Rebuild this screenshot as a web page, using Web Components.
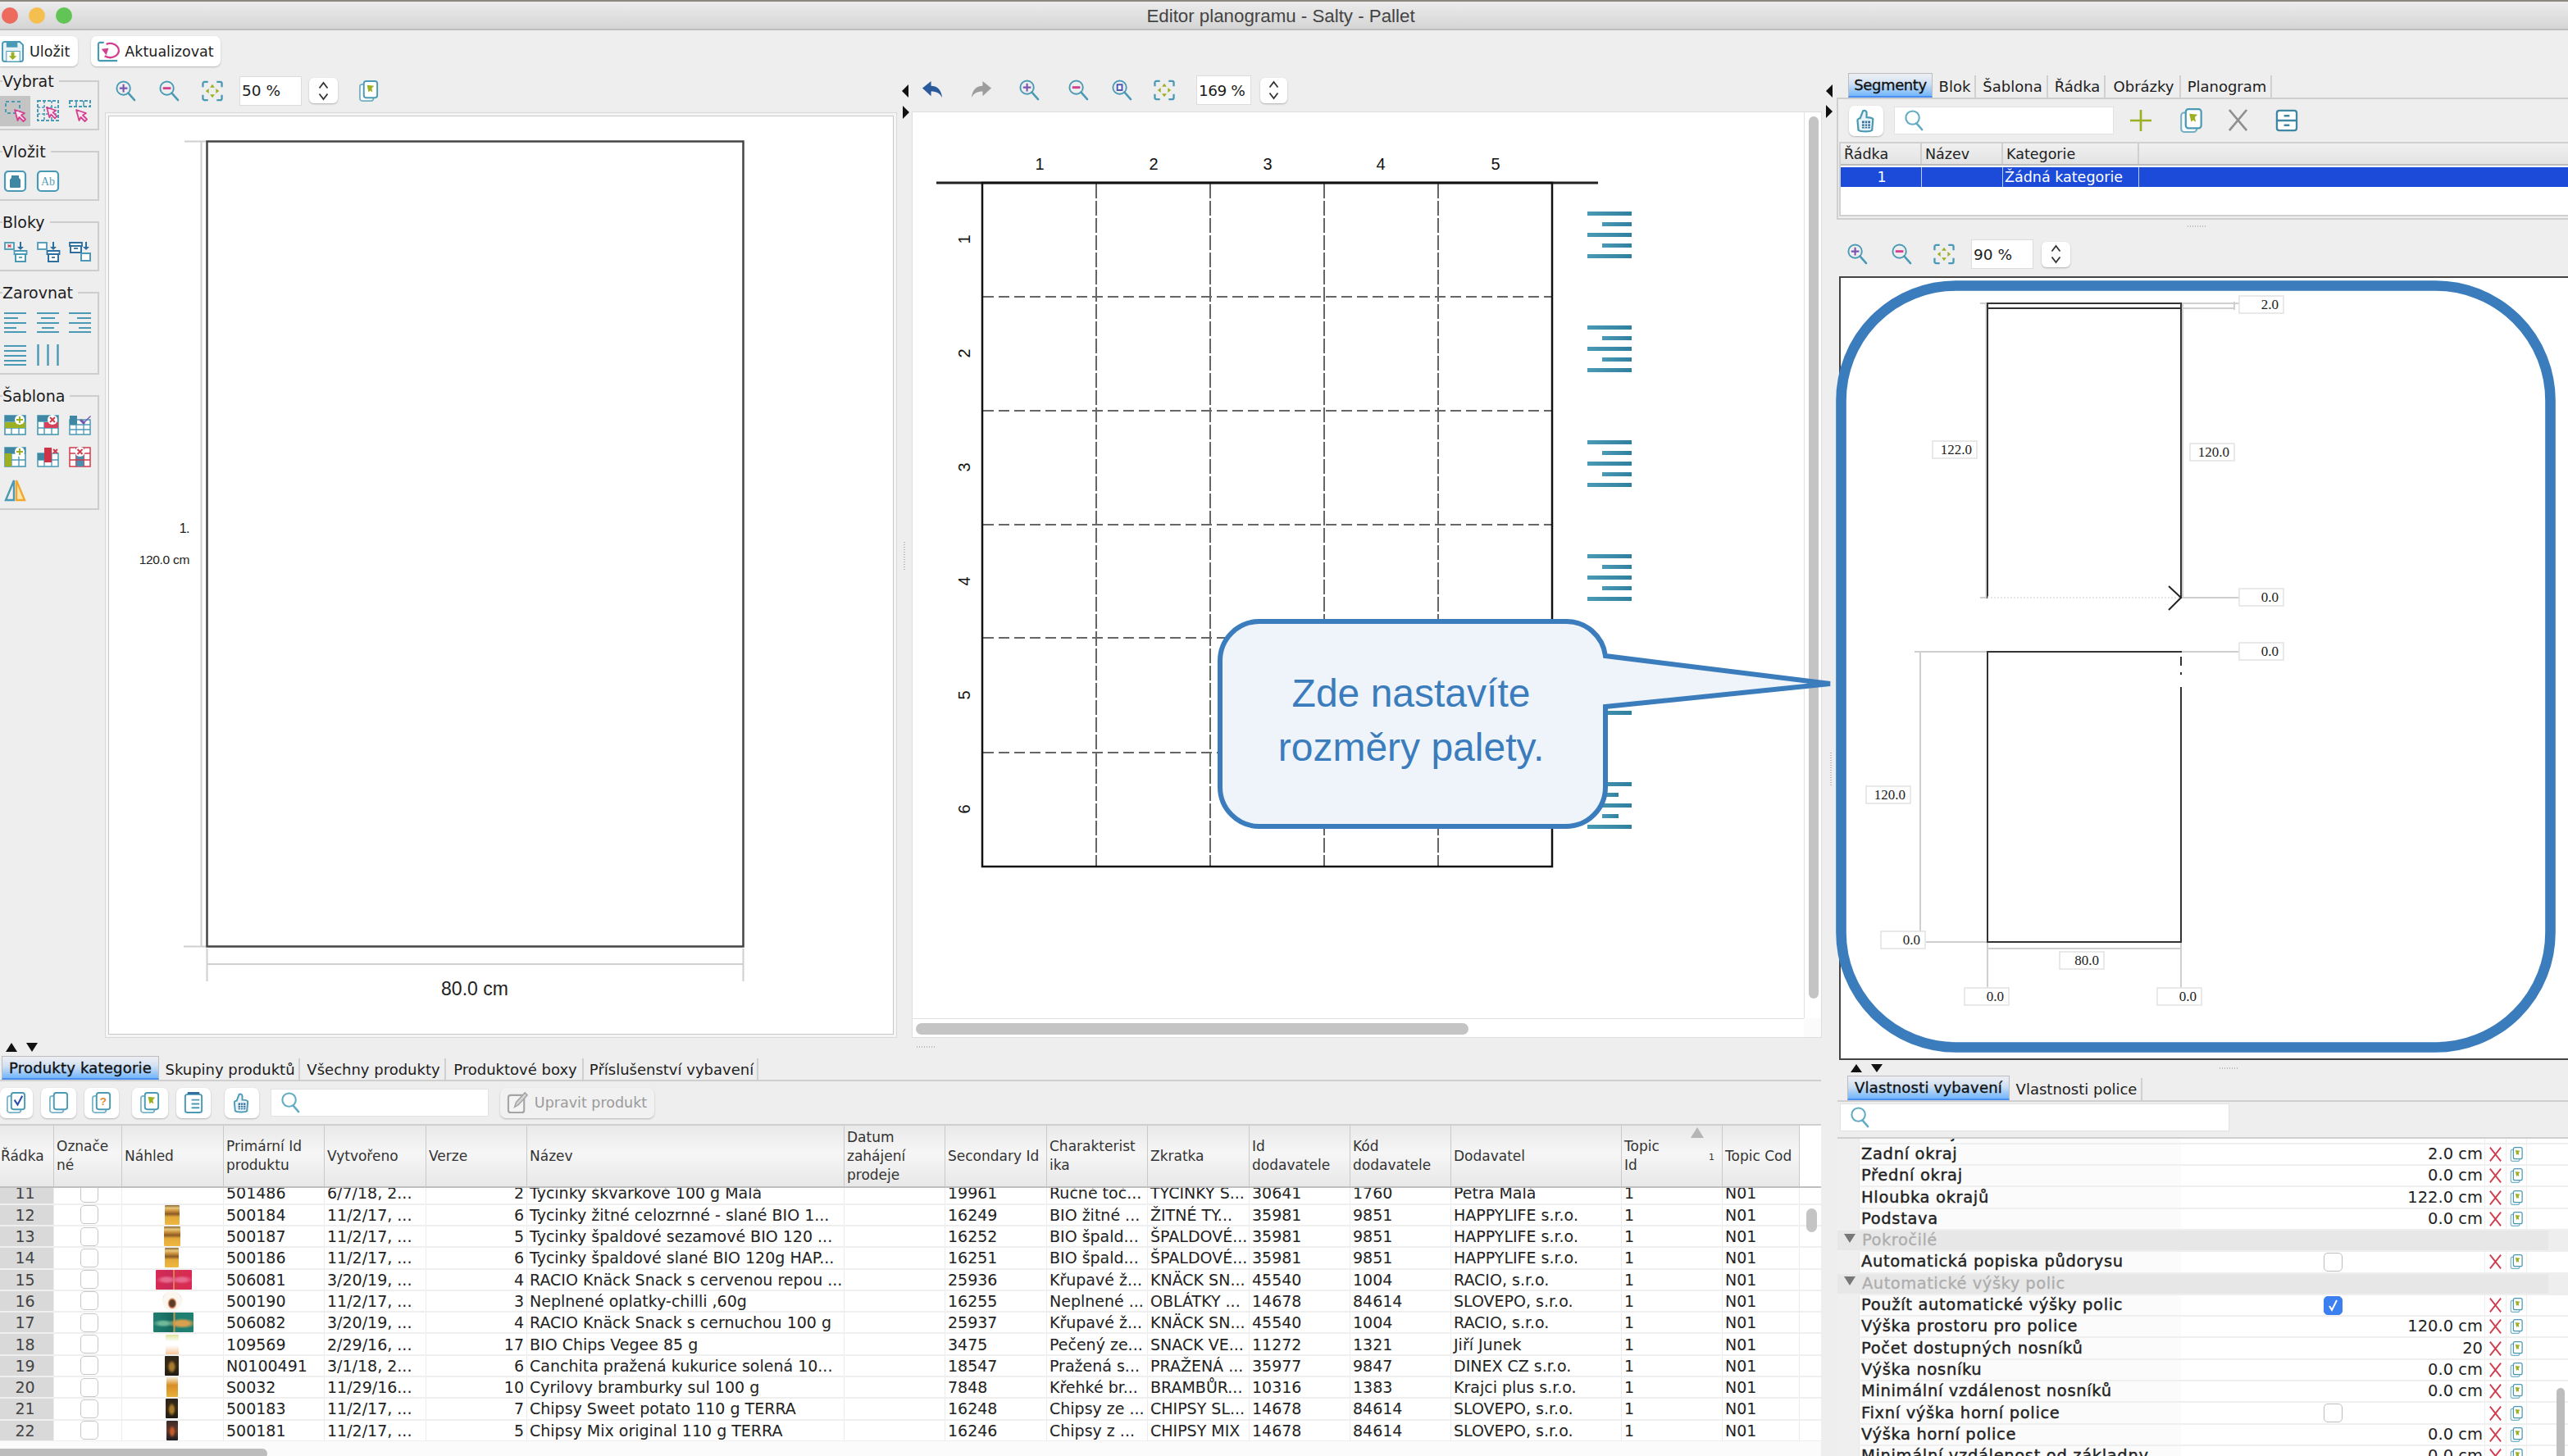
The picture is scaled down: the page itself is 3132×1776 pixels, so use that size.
<![CDATA[<!DOCTYPE html>
<html lang="cs"><head><meta charset="utf-8"><title>Editor planogramu</title>
<style>
html,body{margin:0;padding:0;background:#eee;width:3132px;height:1776px;overflow:hidden}
body{font-family:"DejaVu Sans",sans-serif;color:#1c1c1c}
</style></head><body>
<plano-app></plano-app>
<script>
const T='#4a9ab5',B='#2f6f9f',M='#d2408f',G='#9cb022',R='#d23b4b',V='#7a55b0';
const zoomI=(inner,c=T)=>`<circle cx="11" cy="10" r="8.5" fill="none" stroke="${c}" stroke-width="2"/><path d="M17 16l8 9" stroke="${c}" stroke-width="2.6" stroke-linecap="round"/>${inner}`;
const fourArrows=`<path d="M13.5 5l3 4h-6zM13.5 22l3-4h-6zM5 13.5l4-3v6zM22 13.5l-4-3v6z" fill="${G}"/>`;
const tbl=(h,extra='')=>`<rect x="1" y="1" width="25" height="23" fill="#fff" stroke="${T}" stroke-width="1.6"/><path d="M1 8h25M1 16h25M9 1v23M18 1v23" stroke="${T}" stroke-width="1.4"/>${h}${extra}`;
const cur=(x,y,s=1)=>`<path transform="translate(${x} ${y}) scale(${s})" d="M0 0l12 4-4 2.500 5 5-2.500 2.500-5-5-2 4z" fill="#fbe3f0" stroke="${M}" stroke-width="1.800" stroke-linejoin="round"/>`;
const hand=`<path d="M10 3c2-1 4 0 4 2v5c3 0 6 0 7 2l-1 12c-1 1-3 1.500-7 1.500s-7-.5-8-1.500L4 13c0-1 2-2 3-2z" fill="#eaf4f8" stroke="${T}" stroke-width="2"/><path d="M9 14h9v8H9z" fill="${B}"/><path d="M12 14v8M15 14v8M9 17h9M9 20h9" stroke="#eaf4f8" stroke-width="1"/>`;
const copy=(c=G)=>`<rect x="2" y="5" width="17" height="21" rx="3" fill="#fff" stroke="${T}" stroke-width="1.800" opacity=".75"/><rect x="7" y="1" width="17" height="21" rx="3" fill="#fff" stroke="${T}" stroke-width="2"/><path d="M11 6l9 1-3 3 1 5-3-2-2 2z" fill="${c}"/>`;
const docs=(inner='')=>`<rect x="2" y="5" width="17" height="21" rx="3" fill="#fff" stroke="${T}" stroke-width="1.800" opacity=".75"/><rect x="7" y="1" width="17" height="21" rx="3" fill="#fff" stroke="${T}" stroke-width="2"/>${inner}`;
const ICONS={
save:`<path d="M3 1h19l4 4v18a3 3 0 0 1-3 3H3a3 3 0 0 1-3-3V4a3 3 0 0 1 3-3z" fill="#e8f3f7" stroke="${T}" stroke-width="2"/><rect x="5" y="1" width="14" height="7" fill="${T}"/><rect x="5" y="13" width="17" height="13" fill="#fff" stroke="${T}" stroke-width="1"/><path d="M11 14h4v5h3l-5 5-5-5h3z" fill="${G}"/>`,
refresh:`<path d="M8 2H3a2 2 0 0 0-2 2v19a2 2 0 0 0 2 2h22" fill="none" stroke="${T}" stroke-width="2.200"/><path d="M11 4a11 9 0 1 1 -2 15" fill="none" stroke="${M}" stroke-width="2.400"/><path d="M5 10l9-1-3 9z" fill="${M}"/>`,
selRect:`<rect x="2" y="2" width="17" height="14" fill="none" stroke="${T}" stroke-width="2" stroke-dasharray="4 3"/>${cur(13,12,1)}`,
selGrid:`<rect x="1" y="1" width="25" height="24" fill="none" stroke="${T}" stroke-width="2" stroke-dasharray="4 2"/><path d="M1 9h25M1 17h25M9 1v24M18 1v24" stroke="${T}" stroke-width="1.600" stroke-dasharray="3 2"/>${cur(12,9,.95)}`,
selRow:`<rect x="1" y="1" width="25" height="7" fill="none" stroke="${T}" stroke-width="2" stroke-dasharray="4 2"/><path d="M9 1v7M18 1v7" stroke="${T}" stroke-width="1.600"/>${cur(9,12,1)}`,
shelf:`<rect x="1" y="1" width="25" height="24" rx="4" fill="#fff" stroke="${T}" stroke-width="2.200"/><path d="M9 6h9v3l2 2v9a1 1 0 0 1-1 1H8a1 1 0 0 1-1-1v-9l2-2z" fill="#3f87a3"/>`,
ab:`<rect x="1" y="1" width="25" height="24" rx="4" fill="#fff" stroke="${T}" stroke-width="2.200"/><text x="13.500" y="18" font-family="Liberation Serif" font-size="14" text-anchor="middle" fill="#5a9fb8">Ab</text>`,
blk1:`<rect x="1" y="2" width="11" height="8" fill="#e8f3f7" stroke="${T}" stroke-width="1.800"/><path d="M4.500 4.500l4 3M8.500 4.500l-4 3" stroke="${R}" stroke-width="1.500"/><path d="M20 1v7" stroke="${B}" stroke-width="2"/><path d="M16 7h8l-4 4z" fill="${B}"/><path d="M14 15v10h12V15z" fill="#fff" stroke="${T}" stroke-width="2"/><path d="M12.500 12h15v4h-15z" fill="#fff" stroke="${T}" stroke-width="1.800"/><path d="M18 20h4" stroke="${T}" stroke-width="1.800"/>`,
blk2:`<rect x="1" y="2" width="11" height="8" fill="#fff" stroke="${T}" stroke-width="1.800"/><path d="M20 1v7" stroke="${B}" stroke-width="2"/><path d="M16 7h8l-4 4z" fill="${B}"/><path d="M14 15v10h12V15z" fill="#fff" stroke="${B}" stroke-width="2"/><path d="M12.500 12h15v4h-15z" fill="#fff" stroke="${B}" stroke-width="1.800"/><path d="M18 20h4" stroke="${B}" stroke-width="1.800"/>`,
blk3:`<path d="M2 5v9h13V5z" fill="#fff" stroke="${B}" stroke-width="2"/><path d="M1 2h15v4H1z" fill="#fff" stroke="${B}" stroke-width="1.800"/><path d="M6 9h5" stroke="${B}" stroke-width="1.800"/><path d="M21 1v7" stroke="${B}" stroke-width="2"/><path d="M17 7h8l-4 4z" fill="${B}"/><rect x="15" y="15" width="11" height="9" fill="#fff" stroke="${T}" stroke-width="2"/>`,
alignL:`<path d="M0 2h27M0 8h17M0 14h27M0 20h15M0 25h27" stroke="${T}" stroke-width="2"/>`,
alignC:`<path d="M0 2h27M5 8h17M0 14h27M6 20h15M0 25h27" stroke="${T}" stroke-width="2"/>`,
alignR:`<path d="M0 2h27M10 8h17M0 14h27M12 20h15M0 25h27" stroke="${T}" stroke-width="2"/>`,
alignJ:`<path d="M0 2h27M0 8h27M0 14h27M0 20h27M0 25h27" stroke="${T}" stroke-width="2"/>`,
cols:`<path d="M1.500 0v26M13.500 0v26M25.500 0v26" stroke="${T}" stroke-width="2.400"/>`,
tp1:tbl(`<rect x="1" y="1" width="25" height="7" fill="#3f87a3"/><rect x="1" y="9" width="25" height="7" fill="${G}"/><circle cx="19" cy="6" r="6" fill="#fff"/><path d="M19 2v8M15 6h8" stroke="${G}" stroke-width="2"/>`),
tp2:tbl(`<rect x="1" y="1" width="25" height="7" fill="#3f87a3"/><rect x="9" y="9" width="17" height="7" fill="#d9415a"/><circle cx="19" cy="6" r="6" fill="#fff"/><path d="M16 3l6 6M22 3l-6 6" stroke="${R}" stroke-width="2"/>`),
tp3:`<rect x="1" y="6" width="25" height="18" fill="#fff" stroke="${T}" stroke-width="1.500"/><path d="M1 12h25M1 18h25M9 6v18M18 6v18" stroke="${T}" stroke-width="1.300"/><rect x="1" y="1" width="9" height="11" fill="#3f87a3"/><path d="M18 9l5-5 3-3 1 1-3 3-5 5z" fill="${V}"/><path d="M14 6l5 5" stroke="${V}" stroke-width="3"/>`,
tp4:tbl(`<rect x="1" y="1" width="25" height="7" fill="#3f87a3"/><rect x="1" y="8" width="8" height="16" fill="${G}"/><circle cx="19" cy="6" r="6" fill="#fff"/><path d="M19 2v8M15 6h8" stroke="${G}" stroke-width="2"/>`),
tp5:`<rect x="1" y="8" width="25" height="16" fill="#fff" stroke="${T}" stroke-width="1.500"/><path d="M1 16h25M9 8v16M18 8v16" stroke="${T}" stroke-width="1.300"/><rect x="1" y="8" width="8" height="8" fill="#3f87a3"/><rect x="9" y="1" width="9" height="18" fill="#cf3246"/><path d="M20 3l5 5M25 3l-5 5" stroke="${R}" stroke-width="2"/>`,
tp6:`<rect x="1" y="1" width="25" height="23" fill="#fff" stroke="${R}" stroke-width="1.500"/><path d="M9 1v23M18 1v23" stroke="${R}" stroke-width="1.800"/><rect x="9" y="1" width="9" height="23" fill="#4a8fb0"/><path d="M1 8h8M18 8h8M1 16h25" stroke="${R}" stroke-width="1.300"/><circle cx="13.500" cy="6" r="6" fill="#fff"/><path d="M10.500 3l6 6M16.500 3l-6 6" stroke="${R}" stroke-width="2"/>`,
mirror:`<path d="M12 1v24H2z" fill="none" stroke="${T}" stroke-width="2.400"/><path d="M15 1v24h10z" fill="#fde6ad" stroke="#f0a92e" stroke-width="2.400"/>`,
zin:zoomI(`<path d="M11 5v10M6 10h10" stroke="${V}" stroke-width="2.200"/>`),
zout:zoomI(`<path d="M6 10h10" stroke="${M}" stroke-width="3"/>`),
zbox:zoomI(`<rect x="8" y="6.500" width="6" height="7" fill="#fff" stroke="#4a55b0" stroke-width="2"/>`),
fit:`<path d="M8 2H3.500A2 2 0 0 0 1.500 4v4.500M19 2h4.500a2 2 0 0 1 2 2v4.500M8 25H3.500a2 2 0 0 1-2-2v-4.500M19 25h4.500a2 2 0 0 0 2-2v-4.500" fill="none" stroke="${T}" stroke-width="2.400"/>${fourArrows}`,
copy:copy(),
undo:`<path d="M1 11L12 2v6c7 0 13 4 14 15-3-6-7-8-14-8v6z" fill="#2a5a9c"/>`,
redo:`<path d="M26 11L15 2v6C8 8 2 12 1 23c3-6 7-8 14-8v6z" fill="#9d9d9d"/>`,
glass:`<circle cx="11" cy="10" r="8.500" fill="none" stroke="#62adc4" stroke-width="2.200"/><path d="M16 17l7 8" stroke="#62adc4" stroke-width="2.600" stroke-linecap="round"/>`,
plus:`<path d="M13.500 0v27M0 13.500h27" stroke="${G}" stroke-width="2.800"/>`,
cross:`<path d="M2 0l22 26M24 0L2 26" stroke="#8f8f8f" stroke-width="2.800"/>`,
cabinet:`<rect x="1" y="1" width="25" height="25" rx="3" fill="#fff" stroke="#3f87a3" stroke-width="2.400"/><path d="M1 13.500h25M10 7.500h7M10 19.500h7" stroke="#3f87a3" stroke-width="2.400"/>`,
hand:hand,
dcheck:docs(`<path d="M11 10l4 6 6-11" fill="none" stroke="#2d4fb0" stroke-width="2.200"/>`),
dblank:docs(),
dq:docs(`<text x="15.500" y="17" text-anchor="middle" font-family="Liberation Sans" font-weight="700" font-size="14" fill="#e08a2e">?</text>`),
dlist:`<rect x="3" y="3" width="21" height="23" rx="3" fill="#fff" stroke="${T}" stroke-width="2"/><rect x="6" y="0" width="15" height="3" fill="${B}"/><path d="M11 10h10M11 15h10M11 20h10" stroke="${T}" stroke-width="2"/>`,
edit:`<rect x="1" y="4" width="20" height="22" rx="3" fill="#f4f4f4" stroke="#a5a5a5" stroke-width="2.200"/><path d="M9 19l2-6L22 1l3 3-11 12z" fill="#d5d5d5" stroke="#a5a5a5" stroke-width="1.600"/>`,
xsmall:`<path d="M3 1l21 25M24 1L3 26" stroke="${R}" stroke-width="3"/>`
};
function el(host,css,html){const r=host.shadowRoot||host.attachShadow({mode:'open'});r.innerHTML=`<style>${css}</style>${html}`;return r}
class UiIcon extends HTMLElement{connectedCallback(){const n=this.getAttribute('name');const s=+this.getAttribute('size')||26;const w=+this.getAttribute('w')||s;
 el(this,`:host{display:inline-flex;width:${w}px;height:${s}px;flex:none}svg{display:block;width:100%;height:100%;overflow:visible}`,`<svg viewBox="0 0 27 27" preserveAspectRatio="none">${ICONS[n]||''}</svg>`)}}
customElements.define('ui-icon',UiIcon);
class MacTitlebar extends HTMLElement{connectedCallback(){el(this,`:host{display:flex;align-items:center;justify-content:center;height:37px;box-sizing:border-box;border-top:2px solid #8b8880;border-bottom:2px solid #bdbdbd;background:linear-gradient(#ececec,#d5d5d5);position:relative;font:22.300px "Liberation Sans",sans-serif;color:#444;padding:2px 8px 0 0}
.l{display:flex;gap:13px;margin-left:2px;width:0;flex:none;position:absolute;left:0;top:7px}.d{width:20px;height:20px;border-radius:50%;flex:none}`,
`<div class="l"><div class="d" style="background:#ec6a5e"></div><div class="d" style="background:#f5bf4f"></div><div class="d" style="background:#61c454"></div></div><slot></slot>`)}}
customElements.define('mac-titlebar',MacTitlebar);
class ToolButton extends HTMLElement{connectedCallback(){const i=this.getAttribute('icon');const off=this.hasAttribute('disabled');el(this,`:host{display:inline-flex;align-items:center;gap:7px;box-sizing:border-box;height:37px;padding:0 ${this.hasAttribute('tight')?0:6}px;background:${off?'#f1f1f1':'#fff'};border-radius:7px;box-shadow:0 1px 2px #b5b5b5;font:17.500px "DejaVu Sans",sans-serif;color:${off?'#9a9a9a':'#1d1d1d'};white-space:nowrap;flex:none;justify-content:center}`,
`${i?`<ui-icon name="${i}" size="${this.getAttribute('size')||26}"></ui-icon>`:''}<slot></slot>`)}}
customElements.define('tool-button',ToolButton);
class PaletteGroup extends HTMLElement{connectedCallback(){el(this,`:host{display:block;margin-left:-3px;width:124px;box-sizing:border-box;border:2px solid #cdcdcd;border-left:0;padding:0 0 1.500px 2px;margin-top:25px}
.lg{display:table;margin:-12px 0 0 4px;padding:0 6px 0 0;background:#eee;font:19px/22px "DejaVu Sans",sans-serif;color:#1c1c1c}
.g{display:grid;grid-template-columns:repeat(3,39.500px);grid-auto-rows:39.500px;margin-top:6px}`,
`<div class="lg">${this.getAttribute('label')}</div><div class="g"><slot></slot></div>`)}}
customElements.define('palette-group',PaletteGroup);
class PalItem extends HTMLElement{connectedCallback(){el(this,`:host{display:flex;align-items:center;justify-content:center}
.s{display:flex;align-items:center;justify-content:center;width:37px;height:37px;${this.hasAttribute('on')?'background:#c4c4c4':''}}`,`<div class="s"><ui-icon name="${this.getAttribute('name')}" size="27"></ui-icon></div>`)}}
customElements.define('pal-item',PalItem);
class PalettePanel extends HTMLElement{connectedCallback(){const g=(l,a)=>`<palette-group label="${l}">${a.map(n=>n.startsWith('*')?`<pal-item name="${n.slice(1)}" on></pal-item>`:`<pal-item name="${n}"></pal-item>`).join('')}</palette-group>`;
el(this,`:host{display:block;width:127px;flex:none;padding-top:14px;box-sizing:border-box;overflow:hidden}palette-group:first-of-type{margin-top:0}`,
g('Vybrat',['*selRect','selGrid','selRow'])+g('Vložit',['shelf','ab'])+g('Bloky',['blk1','blk2','blk3'])+g('Zarovnat',['alignL','alignC','alignR','alignJ','cols'])+g('Šablona',['tp1','tp2','tp3','tp4','tp5','tp6','mirror']))}}
customElements.define('palette-panel',PalettePanel);
class ZoomField extends HTMLElement{connectedCallback(){const w=this.getAttribute('w')||76;el(this,`:host{display:inline-flex;align-items:center;box-sizing:border-box;width:${w}px;height:36px;background:#fff;border:1px solid #dcdcdc;padding-left:${this.getAttribute('pad')||2}px;font:18.500px "DejaVu Sans",sans-serif;flex:none;letter-spacing:${this.getAttribute('ls')||0}}`,`<slot></slot>`)}}
customElements.define('zoom-field',ZoomField);
class StepButton extends HTMLElement{connectedCallback(){el(this,`:host{display:inline-flex;align-items:center;justify-content:center;box-sizing:border-box;width:${this.getAttribute('w')||35}px;height:31px;background:#fff;border-radius:6px;box-shadow:0 1px 2px #b0b0b0;flex:none}svg{width:13px;height:24px}`,`<svg viewBox="0 0 13 24"><path d="M1.500 8.500L6.500 2l5 6.500M1.500 15.500l5 6.500 5-6.500" fill="none" stroke="#333" stroke-width="1.800"/></svg>`)}}
customElements.define('step-button',StepButton);
class LeftPane extends HTMLElement{connectedCallback(){el(this,`:host{display:flex;flex-direction:column;width:967px;flex:none}
.bar{height:53px;display:flex;align-items:center;padding-left:13px;box-sizing:border-box}
.p{flex:1;box-sizing:border-box;margin-left:1px;border:1px solid #d9d9d9;background:#f5f5f5;padding:3px;min-height:0}
.i{box-sizing:border-box;height:100%;border:1px solid #c8c8c8;background:#fff;overflow:hidden}
svg{display:block;width:100%;height:100%}
.m{margin-left:27px}`,
`<div class="bar"><ui-icon name="zin"></ui-icon><ui-icon class="m" name="zout"></ui-icon><ui-icon class="m" name="fit"></ui-icon><zoom-field style="margin-left:20px;">50 %</zoom-field><step-button style="margin-left:9px"></step-button><ui-icon style="margin-left:25px" name="copy"></ui-icon></div>
<div class="p"><div class="i"><svg viewBox="133 142 956 1119" preserveAspectRatio="none" font-family="Liberation Sans">
<path d="M225 172.500h27M245.500 172.500V1154M224 1154.500h28M252.500 1157v40M906.500 1157v40M252 1176h655" stroke="#cfcfcf" stroke-width="2" fill="none"/>
<rect x="252.500" y="172.500" width="654" height="982" fill="#fff" stroke="#444" stroke-width="2.500"/>
<text x="231" y="650" text-anchor="end" font-size="16" letter-spacing="-.5" fill="#222">1.</text>
<text x="231" y="688" text-anchor="end" font-size="15.500" letter-spacing="-.3" fill="#222">120.0 cm</text>
<text x="579" y="1214" text-anchor="middle" font-size="23" fill="#222">80.0 cm</text>
</svg></div></div>`)}}
customElements.define('left-pane',LeftPane);
class CenterPane extends HTMLElement{connectedCallback(){
let L='';const xs=[1337,1476,1615,1754],ys=[362,501,640,778,918];
xs.forEach(x=>L+=`<path d="M${x} 224V1056" stroke="#666" stroke-width="2" stroke-dasharray="18 3" fill="none"/>`);
ys.forEach(y=>L+=`<path d="M1199 ${y}H1892" stroke="#666" stroke-width="2" stroke-dasharray="13 6" fill="none"/>`);
[1268,1407,1546,1684,1824].forEach((x,i)=>L+=`<text x="${x}" y="207" text-anchor="middle" font-size="20" fill="#111">${i+1}</text>`);
[292,431,570,709,848,987].forEach((y,i)=>L+=`<text transform="translate(1183 ${y}) rotate(-90)" text-anchor="middle" font-size="20" fill="#111">${i+1}</text>`);
[258,397,537,676,815,954].forEach((y,i)=>{const sw=i==5?20:36;
 [0,13,26,39,52].forEach((d,j)=>{const s=j%2==1;L+=`<rect x="${s?1954:1936}" y="${y+d}" width="${s?sw:54}" height="5" fill="url(#bar)"/>`})});
el(this,`:host{display:flex;flex-direction:column;flex:1;min-width:0}
.bar{height:52px;display:flex;align-items:center;padding-left:30px;box-sizing:border-box;position:relative}
.wrap{flex:1;display:flex;min-height:0}
.gut{width:18px;flex:none;position:relative;display:flex;flex-direction:column}
.tri{width:0;height:0;border-top:8px solid transparent;border-bottom:8px solid transparent;flex:none}
.dots{width:2px;height:36px;margin:516px 0 0 8px;background:repeating-linear-gradient(#bbb 0 1px,transparent 1px 3px)}
.c{flex:1;display:grid;grid-template-columns:1fr 21px;grid-template-rows:1fr 23px;background:#fff;border:1px solid #ddd;margin-right:3px;min-width:0}
svg.d{display:block;width:100%;height:100%;grid-area:1/1}
.vs{border-left:1px solid #e2e2e2;padding:5px 3px 24px 5px;box-sizing:border-box}.vs div{height:100%;background:#c4c4c4;border-radius:7px}
.hs{border-top:1px solid #e2e2e2;padding:5px 0 3px 4px;box-sizing:border-box}.hs div{height:100%;width:674px;background:#c4c4c4;border-radius:7px}
.cn{background:#fbfbfb}
.t{position:absolute;left:6px;top:19px;border-right:8px solid #111}`,
`<div class="bar"><div class="tri t"></div><ui-icon name="undo" w="26"></ui-icon><ui-icon name="redo" style="margin-left:34px"></ui-icon><ui-icon name="zin" style="margin-left:32px"></ui-icon><ui-icon name="zout" style="margin-left:34px"></ui-icon><ui-icon name="zbox" style="margin-left:27px"></ui-icon><ui-icon name="fit" style="margin-left:26px"></ui-icon><zoom-field w="67" style="margin-left:26px" pad="2" ls="-.5px">169 %</zoom-field><step-button w="33" style="margin-left:11px"></step-button></div>
<div class="wrap"><div class="gut"><div class="tri" style="border-left:8px solid #111;margin:-7px 0 0 7px;position:relative"></div><div class="dots"></div></div>
<div class="c"><svg class="d" viewBox="1113 137 1087 1105" preserveAspectRatio="none" font-family="Liberation Sans"><defs><linearGradient id="bar"><stop offset="0" stop-color="#4a9ab5"/><stop offset="1" stop-color="#2f7f9f"/></linearGradient></defs>
${L}<path d="M1142 223H1949" stroke="#222" stroke-width="3"/><rect x="1198" y="223" width="695" height="834" fill="none" stroke="#111" stroke-width="2.500"/></svg>
<div class="vs"><div></div></div><div class="hs"><div></div></div><div class="cn"></div></div></div>`)}}
customElements.define('center-pane',CenterPane);
class TabStrip extends HTMLElement{connectedCallback(){const w=this.getAttribute('widths').split(',').map(Number);const t=this.getAttribute('tabs').split('|');
el(this,`:host{display:flex;height:${this.getAttribute('h')||30}px;flex:none;box-sizing:border-box;padding-left:${this.getAttribute('pl')||0}px;font:18px "DejaVu Sans",sans-serif;color:#1d1d1d}
.t{display:flex;align-items:center;justify-content:center;box-sizing:border-box;border-right:2px solid #d0d0d0;white-space:nowrap;margin-top:3px;padding-left:3px}
.a{margin-top:0;padding-left:0;border:1px solid #bdbdbd;border-bottom:2px solid #4a8ff0;background:linear-gradient(#e9edf3 10%,#cfe0f3 45%,#72b6fb);-webkit-text-stroke:.35px #111;color:#111;letter-spacing:${this.getAttribute('als')||'.2px'}}`,
t.map((x,i)=>`<div class="t ${i==0?'a':''}" style="width:${w[i]}px">${x}</div>`).join(''))}}
customElements.define('tab-strip',TabStrip);
class SearchBox extends HTMLElement{connectedCallback(){el(this,`:host{display:flex;align-items:center;box-sizing:border-box;background:#fff;border:1px solid #e2e2e2;padding-left:11px;height:34px;flex:none}`,`<ui-icon name="glass" size="26"></ui-icon>`)}}
customElements.define('search-box',SearchBox);
const ROWS=[
['11','501486','6/7/18, 2...','2','Tycinky škvarkové 100 g Malá','19961','Ručné toč...','TYČINKY Š...','30641','1760','Petra Malá','',0],
['12','500184','11/2/17, ...','6','Tycinky žitné celozrnné - slané BIO 1...','16249','BIO žitné ...','ŽITNÉ TY...','35981','9851','HAPPYLIFE s.r.o.','o',18],
['13','500187','11/2/17, ...','5','Tycinky špaldové sezamové BIO 120 ...','16252','BIO špald...','ŠPALDOVÉ...','35981','9851','HAPPYLIFE s.r.o.','o',20],
['14','500186','11/2/17, ...','6','Tycinky špaldové slané BIO 120g HAP...','16251','BIO špald...','ŠPALDOVÉ...','35981','9851','HAPPYLIFE s.r.o.','o',17],
['15','506081','3/20/19, ...','4','RACIO Knäck Snack s cervenou repou ...','25936','Křupavé ž...','KNÄCK SN...','45540','1004','RACIO, s.r.o.','r',44],
['16','500190','11/2/17, ...','3','Neplnené oplatky-chilli ,60g','16255','Neplnené ...','OBLÁTKY ...','14678','84614','SLOVEPO, s.r.o.','c',24],
['17','506082','3/20/19, ...','4','RACIO Knäck Snack s cernuchou 100 g','25937','Křupavé ž...','KNÄCK SN...','45540','1004','RACIO, s.r.o.','g',49],
['18','109569','2/29/16, ...','17','BIO Chips Vegee 85 g','3475','Pečený ze...','SNACK VE...','11272','1321','Jiří Junek','p',16],
['19','N0100491','3/1/18, 2...','6','Canchita pražená kukurice solená 10...','18547','Pražená s...','PRAŽENÁ ...','35977','9847','DINEX CZ s.r.o.','d',17],
['20','S0032','11/29/16...','10','Cyrilovy bramburky sul 100 g','7848','Křehké br...','BRAMBŮR...','10316','1383','Krajci plus s.r.o.','y',14],
['21','500183','11/2/17, ...','7','Chipsy Sweet potato 110 g TERRA','16248','Chipsy ze ...','CHIPSY SL...','14678','84614','SLOVEPO, s.r.o.','d',15],
['22','500181','11/2/17, ...','5','Chipsy Mix original 110 g TERRA','16246','Chipsy z ...','CHIPSY MIX','14678','84614','SLOVEPO, s.r.o.','m',14]];
const COLS='66px 83px 124px 123px 124px 123px 387px 123px 124px 123px 124px 123px 123px 208px 123px 94px';
const THUMB={o:'linear-gradient(#8b6a3a,#e7c77a 15%,#c98f3a 30%,#8a5a25 45%,#e2a93a 60%,#efb83f)',r:'radial-gradient(ellipse at 30% 50%,#e76a8e 0 12%,transparent 30%),radial-gradient(ellipse at 72% 50%,#e76a8e 0 12%,transparent 30%),linear-gradient(90deg,#d92a55,#c72a58 47%,#e6b04a 50%,#d5304f 53%,#d92a55)',c:'radial-gradient(ellipse at 50% 62%,#5a3a2a 0 18%,#c06a3a 24%,#fbf6f0 34%,#fbf6f0 70%,#c8654d 84%)',g:'radial-gradient(ellipse at 25% 55%,#6fb89a 0 10%,transparent 26%),radial-gradient(ellipse at 72% 55%,#d9a050 0 16%,transparent 34%),linear-gradient(90deg,#1f7f70,#17685f 48%,#c79a50 52%,#1f7f70 56%)',p:'linear-gradient(#dfe59a,#fff 35%,#fff 55%,#f5c69a)',d:'radial-gradient(ellipse at 50% 55%,#a87a2e 0 20%,transparent 45%),linear-gradient(#2a2418,#3d2c14 50%,#1d1a14)',y:'linear-gradient(#f5ead0,#d98f25 40%,#e5b03a)',m:'radial-gradient(ellipse at 50% 55%,#c25a2a 0 18%,transparent 40%),linear-gradient(#382c28,#6a3a2a 50%,#1d1d22)'};
class ProductRow extends HTMLElement{connectedCallback(){const d=JSON.parse(this.getAttribute('data'));
const [n,id,dt,ver,name,sec,ch,zk,idd,kod,dod,th,tw]=d;
const c=(t,x='')=>`<div class="c ${x}">${t}</div>`;
el(this,`:host{display:grid;grid-template-columns:${COLS};height:26.300px;box-sizing:border-box;border-bottom:2px solid #efefef;font:19px/24px "DejaVu Sans",sans-serif;color:#222;background:#fff}
.c{border-right:1px solid #ececec;padding-left:3px;white-space:nowrap;overflow:hidden;display:flex;align-items:center;box-sizing:border-box}
.n{background:#d9d9d9;justify-content:center;padding:0 4px 0 0;color:#444;border-right:1px solid #eee}.r{justify-content:flex-end;padding:0 3px 0 0}
.cb{width:22px;height:23px;box-sizing:border-box;background:#fff;border:1.500px solid #c6c6c6;border-radius:5px;margin-left:29px}
.t{justify-content:center;padding:0}.th{height:24px;border-radius:1px}`,
c(n,'n')+c('<div class="cb"></div>')+c(th?`<div class="th" style="width:${tw}px;background:${THUMB[th]};${th=='c'?'border-radius:50%;':''}margin-left:${(th=='r'||th=='g')?2:-2}px"></div>`:'','t')+c(id)+c(dt)+c(ver,'r')+c(name)+c('')+c(sec)+c(ch)+c(zk)+c(idd)+c(kod)+c(dod)+c('1')+c('N01'))}}
customElements.define('product-row',ProductRow);
class ProductsPane extends HTMLElement{connectedCallback(){
const hdr=['Řádka','Označe<br>né','Náhled','Primární Id<br>produktu','Vytvořeno','Verze','Název','Datum<br>zahájení<br>prodeje','Secondary Id','Charakterist<br>ika','Zkratka','Id<br>dodavatele','Kód<br>dodavatele','Dodavatel','Topic<br>Id','Topic Cod'];
el(this,`:host{display:block;flex:1;min-height:0;position:relative;overflow:hidden}
.tri{display:flex;gap:13px;height:22px;align-items:center;padding-left:7px;position:relative}.u{width:0;height:0;border-left:7px solid transparent;border-right:7px solid transparent;border-bottom:11px solid #111}.d{border-bottom:0;border-top:11px solid #111;margin-left:-2px}
.sp{width:22px;height:2px;margin-left:1059px;background:repeating-linear-gradient(90deg,#bbb 0 1px,transparent 1px 3px)}
.line{border-bottom:2px solid #cfcfcf;width:2221px}
.tb{display:flex;align-items:center;height:54px;box-sizing:border-box;width:2221px;border-bottom:2px solid #cfcfcf}
.hd{display:grid;grid-template-columns:${COLS} 26px;width:2221px;height:76px;box-sizing:border-box;border-bottom:2px solid #bfbfbf;font:17px/23px "DejaVu Sans",sans-serif;color:#333;background:#fff}
.h{background:linear-gradient(#e9e9e9,#f6f6f6 45%,#e8e8e8);border-right:1px solid #c9c9c9;display:flex;align-items:center;padding-left:3px;box-sizing:border-box;overflow:hidden;white-space:nowrap;position:relative}
.h:first-child{padding-left:1px}.h:last-child{background:#fff;border:0}
.so{position:absolute;left:84px;top:2px;width:0;height:0;border-left:8px solid transparent;border-right:8px solid transparent;border-bottom:13px solid #b5b5b5}
.sn{position:absolute;left:106px;top:27px;font-size:11px}
.body{height:309px;width:2221px;overflow:hidden;position:relative;background:#fff}.rows{margin-top:-5.700px}
.vt{position:absolute;left:2203px;top:25px;width:13px;height:29px;background:#c4c4c4;border-radius:7px}
.hsb{width:2221px;height:18px;background:#fbfbfb;padding-top:9px;box-sizing:border-box}.hsb div{width:326px;height:12px;border-radius:0 7px 7px 0;background:#bdbdbd}`,
`<div class="tri"><div class="u"></div><div class="u d"></div><div class="sp"></div></div>
<div class="line"><tab-strip h="29" tabs="Produkty kategorie|Skupiny produktů|Všechny produkty|Produktové boxy|Příslušenství vybavení" widths="192,172,178,168,213" pl="2"></tab-strip></div>
<div class="tb"><tool-button icon="dcheck" tight style="width:40px"></tool-button><tool-button icon="dblank" tight style="width:43px;margin-left:10px"></tool-button><tool-button icon="dq" tight style="width:42px;margin-left:10px"></tool-button><tool-button icon="copy" tight style="width:44px;margin-left:16px"></tool-button><tool-button icon="dlist" tight style="width:42px;margin-left:10px"></tool-button><tool-button icon="hand" tight style="width:42px;margin-left:17px"></tool-button><search-box style="width:266px;margin-left:14px"></search-box><tool-button icon="edit" disabled style="width:188px;margin-left:14px">Upravit produkt</tool-button></div>
<div class="hd">${hdr.map((h,i)=>`<div class="h">${h.split('<br>').length>1?`<div>${h}</div>`:h}${i==14?'<i class="so"></i><span class="sn">1</span>':''}</div>`).join('')}<div class="h"></div></div>
<div class="body"><div class="rows">${ROWS.map(r=>`<product-row data='${JSON.stringify(r).replace(/'/g,"&#39;")}'></product-row>`).join('')}</div><div class="vt"></div></div>
<div class="hsb"><div></div></div>`)}}
customElements.define('products-pane',ProductsPane);
class SegmentTable extends HTMLElement{connectedCallback(){
el(this,`:host{display:block;margin:0;box-sizing:border-box;background:#fff;border:2px solid #d0d0d0;border-right:0;height:91px;padding:0;font:17.500px "DejaVu Sans",sans-serif;color:#222}
.r{display:grid;grid-template-columns:99px 99px 166px 1fr;box-sizing:border-box}
.r div{display:flex;align-items:center;box-sizing:border-box;padding-left:4px;border-right:2px solid #cfcfcf;white-space:nowrap}
.h{height:27px;background:linear-gradient(#f0f0f0,#e3e3e3);margin-bottom:2px;border-bottom:2px solid #bbb}
.s{height:24px;background:#1b4bd8;color:#fff}.s div{border-right:1.500px solid #bcd0ff;padding-left:2px}.s div:first-child{justify-content:center}`,
`<div class="r h"><div>Řádka</div><div>Název</div><div>Kategorie</div><div style="border:0"></div></div>
<div class="r s"><div>1</div><div></div><div>Žádná kategorie</div><div style="border:0"></div></div>`)}}
customElements.define('segment-table',SegmentTable);
class DrawingPane extends HTMLElement{connectedCallback(){
const lab=(x,y,t)=>`<rect x="${x}" y="${y}" width="54" height="21" fill="#fff" stroke="#e2e2e2" stroke-width="1.500"/><text x="${x+48}" y="${y+16}" text-anchor="end" font-size="17" fill="#222">${t}</text>`;
el(this,`:host{display:block;box-sizing:border-box;flex:1;min-width:0;border-top:2px solid #444;border-left:2px solid #444;border-bottom:2px solid #444;background:#fff;overflow:hidden}svg{display:block;width:100%;height:100%}`,
`<svg viewBox="2245 339 887 952" preserveAspectRatio="none" font-family="Liberation Serif">
<g stroke="#cfcfcf" fill="none"><path stroke-width="3" d="M2423 370V729M2661.500 370V729"/><path stroke-width="2" d="M2415 370h9M2415 729h9M2660 370h71M2660 376h65M2725 368v10M2660 729h71M2335 795h89M2660 795h71M2342 795v341M2349 1149h75M2424 1157h236M2424 1149v56M2660 1149v56"/></g>
<rect x="2424" y="370" width="236" height="359" fill="none" stroke="#333" stroke-width="2"/><path d="M2424 376H2660" stroke="#333" stroke-width="2"/><path d="M2424 729H2659" stroke="#fff" stroke-width="3"/><path d="M2424 729H2660" stroke="#d0d0d0" stroke-dasharray="2 2"/>
<path d="M2645 715l15 14-15 15" fill="none" stroke="#222" stroke-width="2"/>
<rect x="2424" y="795" width="236" height="354" fill="none" stroke="#333" stroke-width="2"/><path d="M2660 796v5M2660 812v8M2660 823v15" stroke="#fff" stroke-width="3"/>
${lab(2731,361,'2.0')+lab(2357,538,'122.0')+lab(2671,541,'120.0')+lab(2731,718,'0.0')+lab(2731,784,'0.0')+lab(2276,959,'120.0')+lab(2294,1136,'0.0')+lab(2512,1161,'80.0')+lab(2396,1205,'0.0')+lab(2631,1205,'0.0')}
</svg>`)}}
customElements.define('drawing-pane',DrawingPane);
class PropRow extends HTMLElement{connectedCallback(){const a=this.getAttribute('label'),v=this.getAttribute('value')||'',cb=this.getAttribute('check'),no=this.hasAttribute('noic');
el(this,`:host{display:grid;grid-template-columns:27px 392px 370px 26px 25px 27px;height:26.300px;box-sizing:border-box;border-bottom:2px solid #efefef;font:19.500px/24px "DejaVu Sans",sans-serif;color:#222;background:#fff}
div{display:flex;align-items:center;box-sizing:border-box;white-space:nowrap;overflow:hidden}
.g{background:#efefef;border-right:1px solid #e5e5e5}.l{padding-left:2px;-webkit-text-stroke:.4px #222;letter-spacing:.65px;background:#fbfbfb}.v{justify-content:flex-end;padding-right:2px}
.cbw{justify-content:flex-start;padding-left:174px}.cb{width:23px;height:23px;background:#fff;border:1.500px solid #bdbdbd;border-radius:5px;box-sizing:border-box}.on{background:#3b7ff1;border-color:#3b7ff1;justify-content:center}
.ic{justify-content:center;border-left:1px solid #eee}`,
`<div class="g"></div><div class="l">${a}</div>${cb!=null?`<div class="cbw"><div class="cb ${cb=='1'?'on':''}">${cb=='1'?'<svg width="15" height="17" viewBox="0 0 15 17"><path d="M3 9l3 5 6-12" fill="none" stroke="#fff" stroke-width="2"/></svg>':''}</div></div>`:`<div class="v">${v}</div>`}<div class="ic">${no?'':'<ui-icon name="xsmall" size="18" w="17"></ui-icon>'}</div><div class="ic">${no?'':'<ui-icon name="copy" size="18" w="17"></ui-icon>'}</div><div class="ic"></div>`)}}
customElements.define('prop-row',PropRow);
class PropSection extends HTMLElement{connectedCallback(){el(this,`:host{display:flex;align-items:center;height:26.300px;box-sizing:border-box;width:867px;background:#e7e7e7;font:19.500px/24px "DejaVu Sans",sans-serif;color:#adadad;border-bottom:2px solid #efefef;-webkit-text-stroke:.3px #adadad;letter-spacing:.5px}
i{width:0;height:0;border-left:7px solid transparent;border-right:7px solid transparent;border-top:11px solid #777;margin:-6px 8px 0 8px}`,`<i></i><slot></slot>`)}}
customElements.define('prop-section',PropSection);
class RightPane extends HTMLElement{connectedCallback(){
const P=(l,v)=>`<prop-row label="${l}" value="${v}"></prop-row>`,C=(l,c)=>`<prop-row label="${l}" check="${c}"></prop-row>`;
el(this,`:host{display:flex;flex-direction:column;width:907px;flex:none;overflow:hidden;position:relative}
.top{display:flex;height:184px;flex:none;padding-top:5px;box-sizing:border-box}
.g{width:15px;flex:none;display:flex;flex-direction:column;padding-top:14px;gap:9px}.t{width:0;height:0;border-top:8px solid transparent;border-bottom:8px solid transparent}
.pn{flex:1;min-width:0;display:flex;flex-direction:column}
.bx{border-top:2px solid #cfcfcf;border-left:2px solid #cfcfcf;height:149px;box-sizing:border-box;border-bottom:2px solid #cfcfcf;padding:0 0 0 1px}
.tb{display:flex;align-items:center;height:52px;padding:0 0 0 12px;box-sizing:border-box}
.spl{height:15px;flex:none;display:flex;justify-content:center}.dots{margin:7px 0 0 0;width:22px;height:2px;background:repeating-linear-gradient(90deg,#bbb 0 1px,transparent 1px 3px)}
.z{height:54px;flex:none;display:flex;align-items:center;padding-left:27px;box-sizing:border-box}
.dr{display:flex;height:956px;flex:none}.dg{width:18px;flex:none}.dv{width:2px;height:42px;margin:581px 0 0 7px;background:repeating-linear-gradient(#bbb 0 1px,transparent 1px 3px)}
.tri{display:flex;gap:13px;height:19px;align-items:center;padding-left:32px;flex:none}.u{width:0;height:0;border-left:7px solid transparent;border-right:7px solid transparent;border-bottom:10px solid #111}.d{border-bottom:0;border-top:10px solid #111;margin-left:-2px}
.tsp{width:22px;height:2px;margin-left:398px;background:repeating-linear-gradient(90deg,#bbb 0 1px,transparent 1px 3px)}
.line{border-bottom:2px solid #cfcfcf;flex:none;margin-left:16px}
.sb{height:45px;flex:none;padding:2px 0 0 3px;box-sizing:border-box;border-bottom:2px solid #cfcfcf;margin-left:16px}
.pr{flex:1;min-height:0;overflow:hidden;margin-left:16px;position:relative}.list{margin-top:-19.500px}
.sc{position:absolute;left:877px;top:304px;width:10px;height:100px;background:#bdbdbd;border-radius:6px}`,
`<div class="top"><div class="g"><div class="t" style="border-right:8px solid #111;margin-left:2px"></div><div class="t" style="border-left:8px solid #111;margin-left:2px"></div></div>
<div class="pn"><tab-strip h="30" pl="14" als="-.4px" tabs="Segmenty|Blok|Šablona|Řádka|Obrázky|Planogram" widths="103,53,88,70,92,111"></tab-strip>
<div class="bx"><div class="tb"><tool-button icon="hand" tight size="30" style="width:42px"></tool-button><search-box style="width:268px;margin-left:13px"></search-box><ui-icon name="plus" style="margin-left:20px"></ui-icon><ui-icon name="copy" style="margin-left:34px" size="30"></ui-icon><ui-icon name="cross" style="margin-left:29px"></ui-icon><ui-icon name="cabinet" style="margin-left:33px"></ui-icon></div><segment-table></segment-table></div></div></div>
<div class="spl"><div class="dots"></div></div>
<div class="z"><ui-icon name="zin"></ui-icon><ui-icon name="zout" style="margin-left:28px"></ui-icon><ui-icon name="fit" style="margin-left:26px"></ui-icon><zoom-field style="margin-left:20px" pad="2">90 %</zoom-field><step-button style="margin-left:10px"></step-button></div>
<div class="dr"><div class="dg"><div class="dv"></div></div><drawing-pane></drawing-pane></div>
<div class="tri"><div class="u"></div><div class="u d"></div><div class="tsp"></div></div>
<div class="line"><tab-strip h="30" pl="12" tabs="Vlastnosti vybavení|Vlastnosti police" widths="198,162"></tab-strip></div>
<div class="sb"><search-box style="width:475px"></search-box></div>
<div class="pr"><div class="list"><prop-row noic label="Boční okraj" value=""></prop-row>${P('Zadní okraj','2.0 cm')+P('Přední okraj','0.0 cm')+P('Hloubka okrajů','122.0 cm')+P('Podstava','0.0 cm')}<prop-section>Pokročilé</prop-section>${C('Automatická popiska půdorysu','0')}<prop-section>Automatické výšky polic</prop-section>${C('Použít automatické výšky polic','1')+P('Výška prostoru pro police','120.0 cm')+P('Počet dostupných nosníků','20')+P('Výška nosníku','0.0 cm')+P('Minimální vzdálenost nosníků','0.0 cm')+C('Fixní výška horní police','0')+P('Výška horní police','0.0 cm')+P('Minimální vzdálenost od základny','0.0 cm')}</div><div class="sc"></div></div>`)}}
customElements.define('right-pane',RightPane);
class AnnotationOverlay extends HTMLElement{connectedCallback(){el(this,`:host{position:absolute;left:0;top:0;width:3132px;height:1776px;pointer-events:none}svg{display:block}`,
`<svg width="3132" height="1776" viewBox="0 0 3132 1776" font-family="Liberation Sans">
<rect x="2245.500" y="348.500" width="865" height="929" rx="140" fill="none" stroke="#3a7cbc" stroke-width="12.600"/>
<path d="M1536 758H1910A48 48 0 0 1 1958 800L2232 834L1958 862V960A48 48 0 0 1 1910 1008H1536A48 48 0 0 1 1488 960V806A48 48 0 0 1 1536 758Z" fill="#eff4fa" stroke="#3a7cbc" stroke-width="6"/>
<text x="1721" y="862" text-anchor="middle" font-size="48" fill="#3a7cbc">Zde nastavíte</text>
<text x="1721" y="928" text-anchor="middle" font-size="48" fill="#3a7cbc">rozměry palety.</text></svg>`)}}
customElements.define('annotation-overlay',AnnotationOverlay);
class PlanoApp extends HTMLElement{connectedCallback(){el(this,`:host{display:flex;flex-direction:column;position:relative;width:3132px;height:1776px;background:#eee;overflow:hidden}
.tb{display:flex;height:47px;gap:16px;align-items:flex-start;padding-top:7px;box-sizing:border-box;flex:none}
.m{display:flex;flex:1;min-height:0}
.lft{width:2225px;flex:none;display:flex;flex-direction:column}
.up{display:flex;height:1182px;flex:none}`,
`<mac-titlebar>Editor planogramu - Salty - Pallet</mac-titlebar>
<div class="tb"><tool-button icon="save" style="width:95px;padding:0 6px 0 3px;justify-content:flex-start;border-radius:0 7px 7px 0">Uložit</tool-button><tool-button icon="refresh" style="width:158px">Aktualizovat</tool-button></div>
<div class="m"><div class="lft"><div class="up"><palette-panel></palette-panel><left-pane></left-pane><center-pane></center-pane></div><products-pane></products-pane></div><right-pane></right-pane></div>
<annotation-overlay></annotation-overlay>`)}}
customElements.define('plano-app',PlanoApp);
</script></body></html>]]>
